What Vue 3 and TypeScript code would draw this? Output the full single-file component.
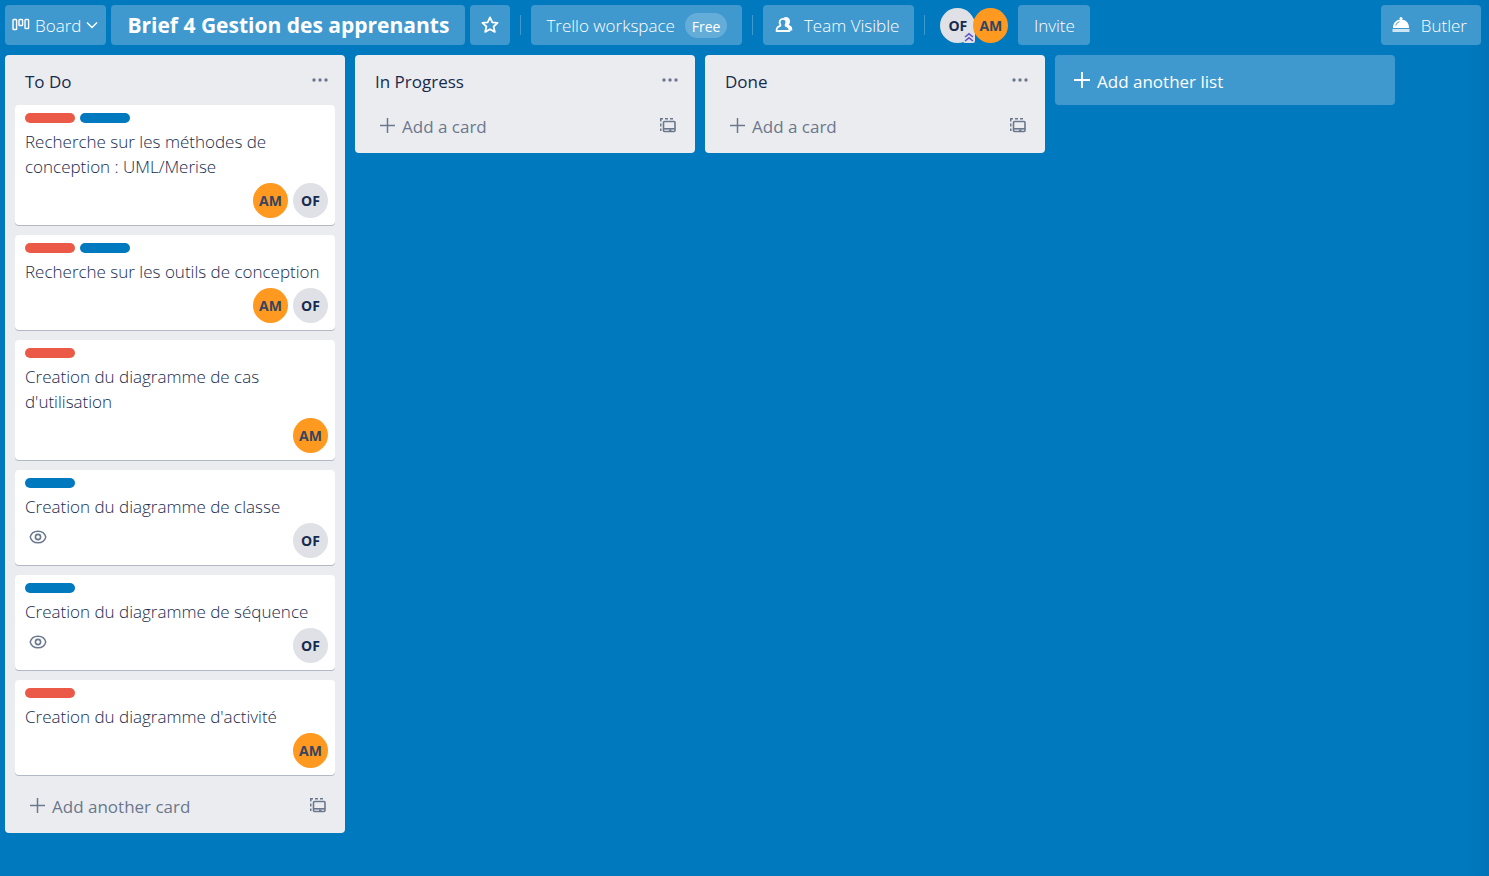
<script setup lang="ts">
type Member = 'AM' | 'OF'
type Label = 'red' | 'blue'

interface Card {
  title: string
  labels: Label[]
  members: Member[]
  watching?: boolean
}

interface List {
  name: string
  add: string
  cards: Card[]
}

const lists: List[] = [
  {
    name: 'To Do',
    add: 'Add another card',
    cards: [
      { title: 'Recherche sur les méthodes de conception : UML/Merise', labels: ['red', 'blue'], members: ['AM', 'OF'] },
      { title: 'Recherche sur les outils de conception', labels: ['red', 'blue'], members: ['AM', 'OF'] },
      { title: "Creation du diagramme de cas d'utilisation", labels: ['red'], members: ['AM'] },
      { title: 'Creation du diagramme de classe', labels: ['blue'], members: ['OF'], watching: true },
      { title: 'Creation du diagramme de séquence', labels: ['blue'], members: ['OF'], watching: true },
      { title: "Creation du diagramme d'activité", labels: ['red'], members: ['AM'] },
    ],
  },
  { name: 'In Progress', add: 'Add a card', cards: [] },
  { name: 'Done', add: 'Add a card', cards: [] },
]
</script>

<template>
  <div class="board">
    <header class="bar">
      <button class="btn view" type="button">
        <svg width="18" height="14" viewBox="0 0 18 14" fill="none" stroke="currentColor" stroke-width="1.4">
          <rect x="1" y="1.5" width="3.6" height="10" rx="0.8" />
          <rect x="7" y="1.5" width="3.6" height="6" rx="0.8" />
          <rect x="13" y="1.5" width="3.6" height="9" rx="0.8" />
        </svg>
        <span>Board</span>
        <svg width="12" height="8" viewBox="0 0 12 8" fill="none" stroke="currentColor" stroke-width="1.4">
          <path d="M1 1.5 6 6.5 11 1.5" />
        </svg>
      </button>
      <h1 class="btn title">Brief 4 Gestion des apprenants</h1>
      <button class="btn star" type="button" aria-label="Star board">
        <svg width="20" height="20" viewBox="0 0 20 20" fill="none" stroke="currentColor" stroke-width="1.800" stroke-linejoin="round">
          <path d="M10 2.4 12.300 7.300 17.6 7.9 13.6 11.5 14.8 16.9 10 14.200 5.200 16.9 6.4 11.5 2.4 7.9 7.700 7.300Z" />
        </svg>
      </button>
      <span class="divider"></span>
      <button class="btn workspace" type="button">
        <span>Trello workspace</span>
        <span class="free">Free</span>
      </button>
      <span class="divider"></span>
      <button class="btn team" type="button">
        <svg width="18" height="18" viewBox="0 0 18 18" fill="none" stroke="currentColor" stroke-width="1.800">
          <path d="M8 2.200C9.500.800 11.500.600 13 1.500 15 2.800 15.500 5.200 14.700 7.200L13.800 8.800 16.300 10.400C17 11 17.300 12 17.300 14.500H14.800L14 11.800 10.800 9.500 11.800 6C11.600 4 10.500 2.500 8 2.200Z" fill="currentColor" stroke="none" />
          <path d="M5.400 8.800C3.600 6.200 4.900 2.900 8 2.900S12.400 6.200 10.600 8.800V9.600L13.400 11.200C14.300 11.800 14.500 13 14.500 15H1.500C1.500 13 1.700 11.800 2.600 11.200L5.400 9.600Z" stroke-linejoin="round" />
        </svg>
        <span>Team Visible</span>
      </button>
      <span class="divider"></span>
      <div class="people">
        <span class="avatar of">
          OF
          <svg class="admin" width="12" height="12" viewBox="0 0 12 12">
            <rect width="12" height="12" rx="2" fill="#dfe1e6" />
            <path d="M2 6 6 2.800 10 6M2 10 6 6.800 10 10" fill="none" stroke="#6554c0" stroke-width="1.600" />
          </svg>
        </span>
        <span class="avatar am">AM</span>
      </div>
      <button class="btn invite" type="button">Invite</button>
      <button class="btn butler" type="button">
        <svg width="18" height="18" viewBox="0 0 18 18" fill="currentColor">
          <circle cx="9" cy="2.500" r="1.500" />
          <path d="M1 12C1 6.500 4.500 3.600 9 3.600S17 6.500 17 12Z" />
          <path d="M3.800 9.500C4.300 7.400 5.500 6.300 7.500 5.800" fill="none" stroke="#3f99cf" stroke-width="1" />
          <rect x="0.500" y="13" width="17" height="3" opacity="0.750" />
        </svg>
        <span>Butler</span>
      </button>
    </header>

    <main class="lists">
      <section v-for="list in lists" :key="list.name" class="list">
        <div class="list-head">
          <h2>{{ list.name }}</h2>
          <button class="more" type="button" :aria-label="`${list.name} actions`">
            <svg width="16" height="4" viewBox="0 0 16 4" fill="currentColor">
              <circle cx="2" cy="2" r="1.700" />
              <circle cx="8" cy="2" r="1.700" />
              <circle cx="14" cy="2" r="1.700" />
            </svg>
          </button>
        </div>
        <div v-if="list.cards.length" class="cards">
          <article v-for="card in list.cards" :key="card.title" class="card">
            <div class="labels">
              <span v-for="label in card.labels" :key="label" class="label" :class="label"></span>
            </div>
            <p>{{ card.title }}</p>
            <div class="meta">
              <svg v-if="card.watching" class="eye" width="18" height="14" viewBox="0 0 18 14" fill="none" stroke="currentColor">
                <path d="M1.200 7C2.200 3.300 5.200 1.200 9 1.200S15.800 3.300 16.800 7C15.800 10.700 12.800 12.800 9 12.800S2.200 10.700 1.200 7Z" stroke-width="1.400" />
                <circle cx="9" cy="7" r="2.600" stroke-width="1.600" />
              </svg>
              <div class="members">
                <span v-for="m in card.members" :key="m" class="avatar" :class="m.toLowerCase()">{{ m }}</span>
              </div>
            </div>
          </article>
        </div>
        <div class="list-foot">
          <button class="add" type="button">
            <svg width="15" height="15" viewBox="0 0 15 15" stroke="currentColor" stroke-width="1.500">
              <path d="M7.500 0V15M0 7.500H15" />
            </svg>
            <span>{{ list.add }}</span>
          </button>
          <button class="template" type="button" aria-label="Create from template">
            <svg width="16" height="15" viewBox="0 0 16 15" fill="none" stroke="currentColor">
              <path d="M.750 13V10.500M.750 8.500V5.500M.750 3.500V.750H3M5 .750H8M10 .750H13" stroke-width="1.500" />
              <rect x="3.500" y="3.500" width="11.500" height="10" rx="1" stroke-width="1.600" />
              <path d="M3.500 10.800H15" stroke-width="1.600" />
              <path d="M9 12.300H11.500" stroke-width="1.600" />
            </svg>
          </button>
        </div>
      </section>
      <button class="add-list" type="button">
        <svg width="16" height="16" viewBox="0 0 16 16" stroke="currentColor" stroke-width="1.800">
          <path d="M8 0V16M0 8H16" />
        </svg>
        <span>Add another list</span>
      </button>
    </main>
  </div>
</template>

<style>
body {
  margin: 0;
  background: #0079bf;
}
</style>

<style scoped>
.board {
  box-sizing: border-box;
  min-height: 100vh;
  padding: 5px;
  background: linear-gradient(to left, rgba(9, 30, 66, 0.06), transparent 24px), #0079bf;
  color: #172b4d;
  font-family: "Open Sans", "Noto Sans", sans-serif;
  font-size: 17px;
  font-weight: 300;
  line-height: 25px;
}

button {
  border: 0;
  padding: 0;
  background: none;
  color: inherit;
  font: inherit;
  cursor: pointer;
}

h1,
h2,
p {
  margin: 0;
}

svg {
  flex: none;
  display: block;
}

.bar {
  display: flex;
  align-items: center;
  gap: 5px;
  padding-right: 3px;
  white-space: nowrap;
}

.btn {
  box-sizing: border-box;
  display: flex;
  align-items: center;
  height: 40px;
  border-radius: 4px;
  background: #3f99cf;
  color: #fff;
}

.view {
  min-width: 101px;
  padding: 0 8px 0 7px;
  gap: 5px;
}

.title {
  min-width: 354px;
  justify-content: center;
  font-size: 21px;
  font-weight: 700;
}

.star {
  width: 40px;
  justify-content: center;
}

.divider {
  width: 1px;
  height: 20px;
  margin: 0 5px;
  background: #3f99cf;
}

.workspace {
  min-width: 211px;
  padding: 0 15px;
  justify-content: space-between;
}

.free {
  height: 25px;
  padding: 0 7px;
  border-radius: 13px;
  background: #65add9;
  font-size: 14px;
  font-weight: 400;
  line-height: 27px;
}

.team {
  min-width: 151px;
  padding: 0 15px 0 12px;
  justify-content: space-between;
}

.people {
  display: flex;
  margin: 0 5px;
}

.people .am {
  margin-left: -2px;
}

.avatar {
  position: relative;
  display: flex;
  align-items: center;
  justify-content: center;
  width: 35px;
  height: 35px;
  border-radius: 50%;
  font-size: 14px;
  font-weight: 700;
}

.avatar.of {
  background: #dfe1e6;
}

.avatar.am {
  background: #ff991f;
  color: #344563;
}

.admin {
  position: absolute;
  right: 0;
  bottom: 0;
}

.invite {
  min-width: 72px;
  justify-content: center;
}

.butler {
  min-width: 100px;
  margin-left: auto;
  padding: 0 14px 0 11px;
  justify-content: space-between;
}

.lists {
  display: flex;
  align-items: flex-start;
  gap: 10px;
  margin-top: 10px;
}

.list {
  flex: none;
  width: 340px;
  border-radius: 4px;
  background: #ebecf0;
}

.list-head {
  display: flex;
  align-items: center;
  justify-content: space-between;
  height: 50px;
  padding: 0 17px 0 20px;
}

.list-head h2 {
  padding-top: 3px;
  font-size: 17px;
  font-weight: 500;
}

.more,
.add,
.template {
  color: #6b778c;
}

.cards {
  display: flex;
  flex-direction: column;
  gap: 10px;
  padding: 0 10px 10px;
}

.card {
  padding: 8px 7px 7px 10px;
  border-radius: 4px;
  background: #fff;
  box-shadow: 0 1px 0 rgba(9, 30, 66, 0.25);
}

.labels {
  display: flex;
  gap: 5px;
  margin-bottom: 6px;
}

.label {
  width: 50px;
  height: 10px;
  border-radius: 5px;
}

.label.red {
  background: #eb5a46;
}

.label.blue {
  background: #0079bf;
}

.meta {
  display: flex;
  align-items: flex-start;
  margin-top: 4px;
}

.eye {
  margin: 7px 0 0 4px;
  color: #6b778c;
}

.members {
  display: flex;
  gap: 5px;
  margin-left: auto;
}

.list-foot {
  display: flex;
  align-items: flex-start;
  justify-content: space-between;
  height: 48px;
  padding: 0 19px 0 25px;
  box-sizing: border-box;
}

.add {
  display: flex;
  align-items: center;
  gap: 7px;
  height: 41px;
  font-weight: 400;
}

.add span,
.add-list span {
  padding-top: 2px;
}

.template {
  display: flex;
  align-items: center;
  height: 41px;
}

.add-list {
  display: flex;
  align-items: center;
  gap: 7px;
  width: 340px;
  height: 50px;
  padding: 0 19px;
  border-radius: 4px;
  background: #3f99cf;
  color: #fff;
  font-weight: 400;
}
</style>
